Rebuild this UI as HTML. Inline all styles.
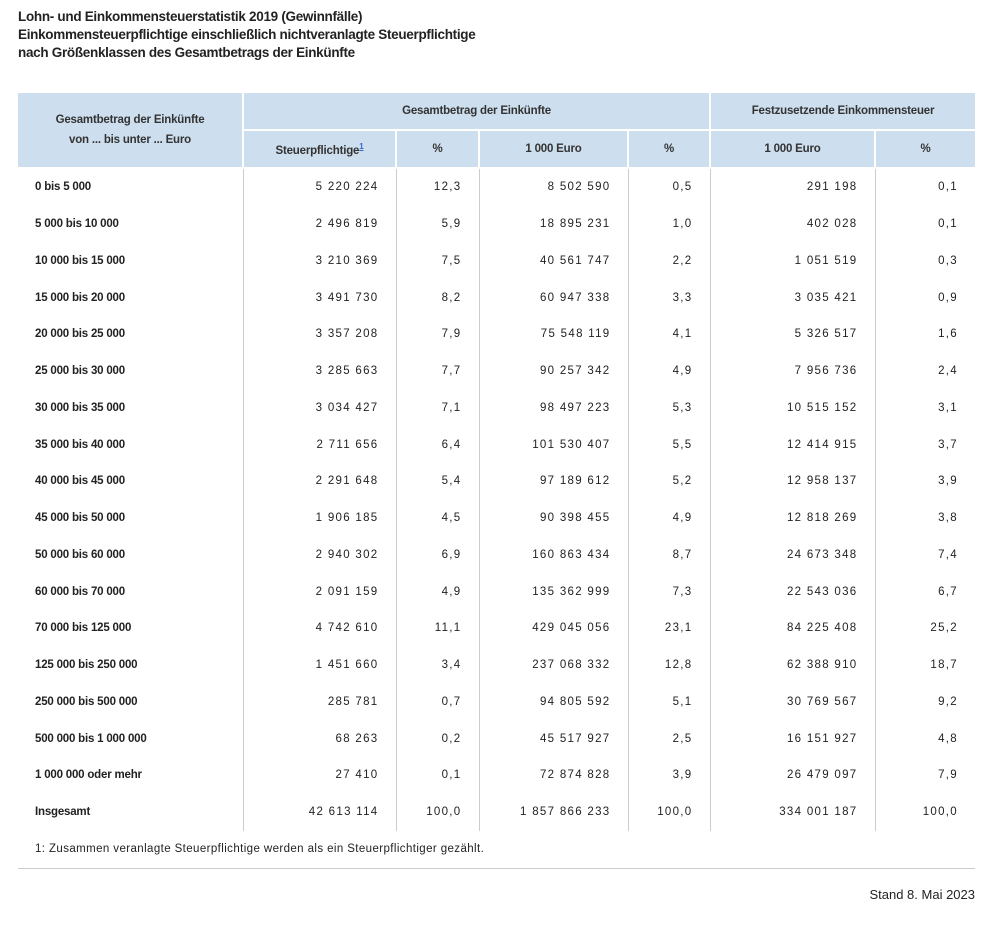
<!DOCTYPE html>
<html><head><meta charset="utf-8"><style>
body{margin:0;background:#fff;color:#222;font-family:"Liberation Sans",sans-serif;width:994px;height:925px;position:relative;overflow:hidden}
h1{position:absolute;left:18px;top:8px;margin:0;font-size:13.5px;line-height:18px;font-weight:bold;letter-spacing:-0.3px}
table{position:absolute;left:18px;top:93px;width:957px;border-collapse:collapse;table-layout:fixed}
th{background:#cddeee;font-size:11.5px;line-height:20px;font-weight:bold;color:#333;border:2px solid #fff;border-top:0;padding:0;text-align:center;letter-spacing:-0.2px}
th:first-child{border-left:0}th:last-child{border-right:0}
tr.h1 th{height:36px}tr.h2 th{height:36px}
td{height:36.75px;padding:0;font-size:11.5px;line-height:14px;border-left:1px solid #ccc;vertical-align:middle}
td:first-child{border-left:0;font-weight:bold;padding-left:17px;letter-spacing:-0.2px}
td.n{text-align:right;padding-right:17px;letter-spacing:1.3px;font-size:11.5px}
sup{font-size:8px;color:#36c;text-decoration:underline}
.fn{position:absolute;left:35px;top:843px;font-size:11.5px;letter-spacing:0.4px}
.line{position:absolute;left:18px;top:868px;width:957px;height:1px;background:#ccc}
.st{position:absolute;right:19px;top:887px;font-size:13px}
</style></head><body>
<h1>Lohn- und Einkommensteuerstatistik 2019 (Gewinnfälle)<br>Einkommensteuerpflichtige einschließlich nichtveranlagte Steuerpflichtige<br>nach Größenklassen des Gesamtbetrags der Einkünfte</h1>
<table>
<colgroup><col style="width:225px"><col style="width:153px"><col style="width:83px"><col style="width:149px"><col style="width:82px"><col style="width:165px"><col style="width:100px"></colgroup>
<tr class="h1"><th rowspan="2">Gesamtbetrag der Einkünfte<br>von ... bis unter ... Euro</th><th colspan="4">Gesamtbetrag der Einkünfte</th><th colspan="2">Festzusetzende Einkommensteuer</th></tr>
<tr class="h2"><th>Steuerpflichtige<sup>1</sup></th><th>%</th><th>1 000 Euro</th><th>%</th><th>1 000 Euro</th><th>%</th></tr>
<tr><td>0 bis 5 000</td><td class="n">5 220 224</td><td class="n">12,3</td><td class="n">8 502 590</td><td class="n">0,5</td><td class="n">291 198</td><td class="n">0,1</td></tr>
<tr><td>5 000 bis 10 000</td><td class="n">2 496 819</td><td class="n">5,9</td><td class="n">18 895 231</td><td class="n">1,0</td><td class="n">402 028</td><td class="n">0,1</td></tr>
<tr><td>10 000 bis 15 000</td><td class="n">3 210 369</td><td class="n">7,5</td><td class="n">40 561 747</td><td class="n">2,2</td><td class="n">1 051 519</td><td class="n">0,3</td></tr>
<tr><td>15 000 bis 20 000</td><td class="n">3 491 730</td><td class="n">8,2</td><td class="n">60 947 338</td><td class="n">3,3</td><td class="n">3 035 421</td><td class="n">0,9</td></tr>
<tr><td>20 000 bis 25 000</td><td class="n">3 357 208</td><td class="n">7,9</td><td class="n">75 548 119</td><td class="n">4,1</td><td class="n">5 326 517</td><td class="n">1,6</td></tr>
<tr><td>25 000 bis 30 000</td><td class="n">3 285 663</td><td class="n">7,7</td><td class="n">90 257 342</td><td class="n">4,9</td><td class="n">7 956 736</td><td class="n">2,4</td></tr>
<tr><td>30 000 bis 35 000</td><td class="n">3 034 427</td><td class="n">7,1</td><td class="n">98 497 223</td><td class="n">5,3</td><td class="n">10 515 152</td><td class="n">3,1</td></tr>
<tr><td>35 000 bis 40 000</td><td class="n">2 711 656</td><td class="n">6,4</td><td class="n">101 530 407</td><td class="n">5,5</td><td class="n">12 414 915</td><td class="n">3,7</td></tr>
<tr><td>40 000 bis 45 000</td><td class="n">2 291 648</td><td class="n">5,4</td><td class="n">97 189 612</td><td class="n">5,2</td><td class="n">12 958 137</td><td class="n">3,9</td></tr>
<tr><td>45 000 bis 50 000</td><td class="n">1 906 185</td><td class="n">4,5</td><td class="n">90 398 455</td><td class="n">4,9</td><td class="n">12 818 269</td><td class="n">3,8</td></tr>
<tr><td>50 000 bis 60 000</td><td class="n">2 940 302</td><td class="n">6,9</td><td class="n">160 863 434</td><td class="n">8,7</td><td class="n">24 673 348</td><td class="n">7,4</td></tr>
<tr><td>60 000 bis 70 000</td><td class="n">2 091 159</td><td class="n">4,9</td><td class="n">135 362 999</td><td class="n">7,3</td><td class="n">22 543 036</td><td class="n">6,7</td></tr>
<tr><td>70 000 bis 125 000</td><td class="n">4 742 610</td><td class="n">11,1</td><td class="n">429 045 056</td><td class="n">23,1</td><td class="n">84 225 408</td><td class="n">25,2</td></tr>
<tr><td>125 000 bis 250 000</td><td class="n">1 451 660</td><td class="n">3,4</td><td class="n">237 068 332</td><td class="n">12,8</td><td class="n">62 388 910</td><td class="n">18,7</td></tr>
<tr><td>250 000 bis 500 000</td><td class="n">285 781</td><td class="n">0,7</td><td class="n">94 805 592</td><td class="n">5,1</td><td class="n">30 769 567</td><td class="n">9,2</td></tr>
<tr><td>500 000 bis 1 000 000</td><td class="n">68 263</td><td class="n">0,2</td><td class="n">45 517 927</td><td class="n">2,5</td><td class="n">16 151 927</td><td class="n">4,8</td></tr>
<tr><td>1 000 000 oder mehr</td><td class="n">27 410</td><td class="n">0,1</td><td class="n">72 874 828</td><td class="n">3,9</td><td class="n">26 479 097</td><td class="n">7,9</td></tr>
<tr><td>Insgesamt</td><td class="n">42 613 114</td><td class="n">100,0</td><td class="n">1 857 866 233</td><td class="n">100,0</td><td class="n">334 001 187</td><td class="n">100,0</td></tr>
</table>
<div class="fn">1: Zusammen veranlagte Steuerpflichtige werden als ein Steuerpflichtiger gezählt.</div>
<div class="line"></div>
<div class="st">Stand 8. Mai 2023</div>
</body></html>
